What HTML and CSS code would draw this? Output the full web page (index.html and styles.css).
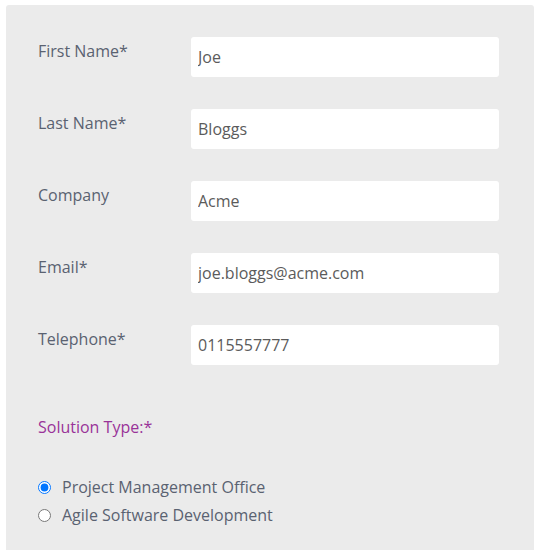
FILE: index.html
```html
<!DOCTYPE html>
<html>
<head>
<meta charset="utf-8">
<link rel="stylesheet" href="styles.css">
</head>
<body>
<form class="panel">
  <div class="row">
    <label class="label">First Name*</label>
    <input class="field" type="text" value="Joe">
  </div>
  <div class="row">
    <label class="label">Last Name*</label>
    <input class="field" type="text" value="Bloggs">
  </div>
  <div class="row">
    <label class="label">Company</label>
    <input class="field" type="text" value="Acme">
  </div>
  <div class="row">
    <label class="label">Email*</label>
    <input class="field" type="text" value="joe.bloggs@acme.com">
  </div>
  <div class="row">
    <label class="label">Telephone*</label>
    <input class="field" type="text" value="0115557777">
  </div>
  <div class="solution">Solution Type:*</div>
  <div class="options">
    <label class="option"><input type="radio" name="sol" checked> Project Management Office</label>
    <label class="option"><input type="radio" name="sol"> Agile Software Development</label>
  </div>
</form>
</body>
</html>
```

FILE: styles.css
```css
html, body {
  margin: 0;
  padding: 0;
  background: #ffffff;
}
body {
  padding: 5px 5px 0 6px;
  font-family: "Open Sans", sans-serif;
  font-size: 16px;
}
.panel {
  background: #ebebeb;
  border-radius: 3px 3px 0 0;
  padding: 32px 35px 10px 32px;
  display: flex;
  flex-direction: column;
  width: 461px;
  min-height: 510px;
}
.row {
  display: flex;
  align-items: flex-start;
  margin-bottom: 32px;
}
.label {
  width: 153px;
  flex: none;
  color: #5a6271;
  line-height: 22px;
  padding-top: 3px;
}
.field {
  width: 308px;
  height: 40px;
  box-sizing: border-box;
  border: none;
  border-radius: 3px;
  background: #ffffff;
  padding: 0 7px;
  font-family: "Open Sans", sans-serif;
  font-size: 16px;
  color: #5b5b5b;
  outline: none;
}
.solution {
  color: #993399;
  line-height: 22px;
  margin-top: 19px;
}
.options {
  margin-top: 35px;
  display: flex;
  flex-direction: column;
}
.option {
  display: flex;
  align-items: center;
  color: #5a6271;
  line-height: 28px;
  height: 28px;
}
.option input {
  margin: 0 11px 0 0;
  width: 13px;
  height: 13px;
}
```
